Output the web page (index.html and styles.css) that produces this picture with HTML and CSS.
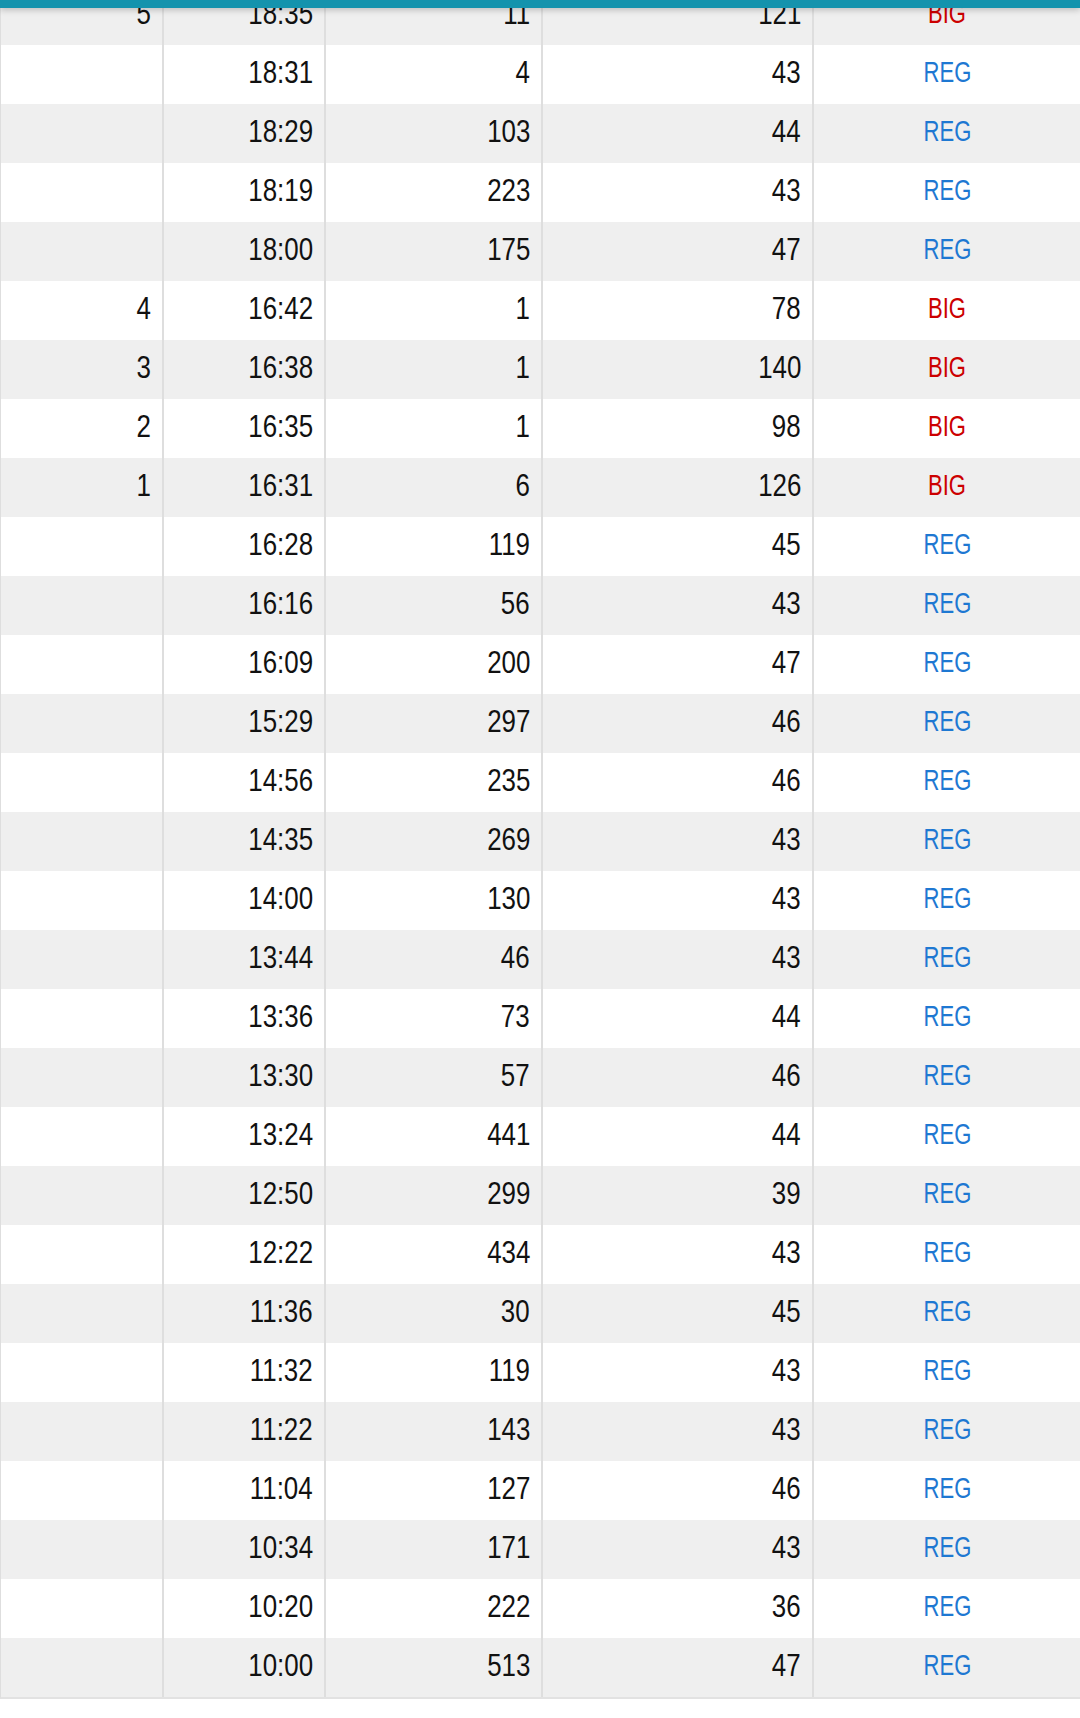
FILE: index.html
```html
<!DOCTYPE html>
<html>
<head>
<meta charset="utf-8">
<link rel="stylesheet" href="styles.css">
</head>
<body>
<div class="topbar"></div>
<div class="table">
  <div class="row odd"><div class="c"><span>5</span></div><div class="c"><span>18:35</span></div><div class="c"><span>11</span></div><div class="c"><span>121</span></div><div class="c t big"><span>BIG</span></div></div>
  <div class="row"><div class="c"></div><div class="c"><span>18:31</span></div><div class="c"><span>4</span></div><div class="c"><span>43</span></div><div class="c t reg"><span>REG</span></div></div>
  <div class="row odd"><div class="c"></div><div class="c"><span>18:29</span></div><div class="c"><span>103</span></div><div class="c"><span>44</span></div><div class="c t reg"><span>REG</span></div></div>
  <div class="row"><div class="c"></div><div class="c"><span>18:19</span></div><div class="c"><span>223</span></div><div class="c"><span>43</span></div><div class="c t reg"><span>REG</span></div></div>
  <div class="row odd"><div class="c"></div><div class="c"><span>18:00</span></div><div class="c"><span>175</span></div><div class="c"><span>47</span></div><div class="c t reg"><span>REG</span></div></div>
  <div class="row"><div class="c"><span>4</span></div><div class="c"><span>16:42</span></div><div class="c"><span>1</span></div><div class="c"><span>78</span></div><div class="c t big"><span>BIG</span></div></div>
  <div class="row odd"><div class="c"><span>3</span></div><div class="c"><span>16:38</span></div><div class="c"><span>1</span></div><div class="c"><span>140</span></div><div class="c t big"><span>BIG</span></div></div>
  <div class="row"><div class="c"><span>2</span></div><div class="c"><span>16:35</span></div><div class="c"><span>1</span></div><div class="c"><span>98</span></div><div class="c t big"><span>BIG</span></div></div>
  <div class="row odd"><div class="c"><span>1</span></div><div class="c"><span>16:31</span></div><div class="c"><span>6</span></div><div class="c"><span>126</span></div><div class="c t big"><span>BIG</span></div></div>
  <div class="row"><div class="c"></div><div class="c"><span>16:28</span></div><div class="c"><span>119</span></div><div class="c"><span>45</span></div><div class="c t reg"><span>REG</span></div></div>
  <div class="row odd"><div class="c"></div><div class="c"><span>16:16</span></div><div class="c"><span>56</span></div><div class="c"><span>43</span></div><div class="c t reg"><span>REG</span></div></div>
  <div class="row"><div class="c"></div><div class="c"><span>16:09</span></div><div class="c"><span>200</span></div><div class="c"><span>47</span></div><div class="c t reg"><span>REG</span></div></div>
  <div class="row odd"><div class="c"></div><div class="c"><span>15:29</span></div><div class="c"><span>297</span></div><div class="c"><span>46</span></div><div class="c t reg"><span>REG</span></div></div>
  <div class="row"><div class="c"></div><div class="c"><span>14:56</span></div><div class="c"><span>235</span></div><div class="c"><span>46</span></div><div class="c t reg"><span>REG</span></div></div>
  <div class="row odd"><div class="c"></div><div class="c"><span>14:35</span></div><div class="c"><span>269</span></div><div class="c"><span>43</span></div><div class="c t reg"><span>REG</span></div></div>
  <div class="row"><div class="c"></div><div class="c"><span>14:00</span></div><div class="c"><span>130</span></div><div class="c"><span>43</span></div><div class="c t reg"><span>REG</span></div></div>
  <div class="row odd"><div class="c"></div><div class="c"><span>13:44</span></div><div class="c"><span>46</span></div><div class="c"><span>43</span></div><div class="c t reg"><span>REG</span></div></div>
  <div class="row"><div class="c"></div><div class="c"><span>13:36</span></div><div class="c"><span>73</span></div><div class="c"><span>44</span></div><div class="c t reg"><span>REG</span></div></div>
  <div class="row odd"><div class="c"></div><div class="c"><span>13:30</span></div><div class="c"><span>57</span></div><div class="c"><span>46</span></div><div class="c t reg"><span>REG</span></div></div>
  <div class="row"><div class="c"></div><div class="c"><span>13:24</span></div><div class="c"><span>441</span></div><div class="c"><span>44</span></div><div class="c t reg"><span>REG</span></div></div>
  <div class="row odd"><div class="c"></div><div class="c"><span>12:50</span></div><div class="c"><span>299</span></div><div class="c"><span>39</span></div><div class="c t reg"><span>REG</span></div></div>
  <div class="row"><div class="c"></div><div class="c"><span>12:22</span></div><div class="c"><span>434</span></div><div class="c"><span>43</span></div><div class="c t reg"><span>REG</span></div></div>
  <div class="row odd"><div class="c"></div><div class="c"><span>11:36</span></div><div class="c"><span>30</span></div><div class="c"><span>45</span></div><div class="c t reg"><span>REG</span></div></div>
  <div class="row"><div class="c"></div><div class="c"><span>11:32</span></div><div class="c"><span>119</span></div><div class="c"><span>43</span></div><div class="c t reg"><span>REG</span></div></div>
  <div class="row odd"><div class="c"></div><div class="c"><span>11:22</span></div><div class="c"><span>143</span></div><div class="c"><span>43</span></div><div class="c t reg"><span>REG</span></div></div>
  <div class="row"><div class="c"></div><div class="c"><span>11:04</span></div><div class="c"><span>127</span></div><div class="c"><span>46</span></div><div class="c t reg"><span>REG</span></div></div>
  <div class="row odd"><div class="c"></div><div class="c"><span>10:34</span></div><div class="c"><span>171</span></div><div class="c"><span>43</span></div><div class="c t reg"><span>REG</span></div></div>
  <div class="row"><div class="c"></div><div class="c"><span>10:20</span></div><div class="c"><span>222</span></div><div class="c"><span>36</span></div><div class="c t reg"><span>REG</span></div></div>
  <div class="row odd"><div class="c"></div><div class="c"><span>10:00</span></div><div class="c"><span>513</span></div><div class="c"><span>47</span></div><div class="c t reg"><span>REG</span></div></div>
</div>
</body>
</html>
```

FILE: styles.css
```css
html, body {
  margin: 0;
  padding: 0;
  background: #ffffff;
}
body {
  font-family: "Liberation Sans", Arial, sans-serif;
  color: #111111;
  overflow: hidden;
}
.topbar {
  position: fixed;
  top: 0;
  left: 0;
  right: 0;
  height: 8px;
  background: #1493ad;
  box-shadow: 0 2px 6px rgba(0, 0, 0, 0.22);
  z-index: 2;
}
.table {
  margin-top: -14px;
  border-left: 1px solid #dedede;
  border-bottom: 2px solid #e2e2e2;
}
.row {
  display: grid;
  grid-template-columns: 163px 162px 217px 271px 1fr;
  height: 59px;
  background: #ffffff;
}
.row.odd {
  background: #efefef;
}
.c {
  box-sizing: border-box;
  border-right: 2px solid #dedede;
  text-align: right;
  padding: 0 11px 5px 0;
  font-size: 32px;
  line-height: 54px;
  white-space: nowrap;
}
.c span {
  display: inline-block;
  transform: scaleX(0.81);
  transform-origin: right center;
}
.c.t {
  border-right: none;
  text-align: center;
  padding-right: 0;
  font-size: 29px;
}
.c.t span {
  transform: scaleX(0.76);
  transform-origin: center center;
}
.big { color: #cc0000; }
.reg { color: #1e78d2; }
```
